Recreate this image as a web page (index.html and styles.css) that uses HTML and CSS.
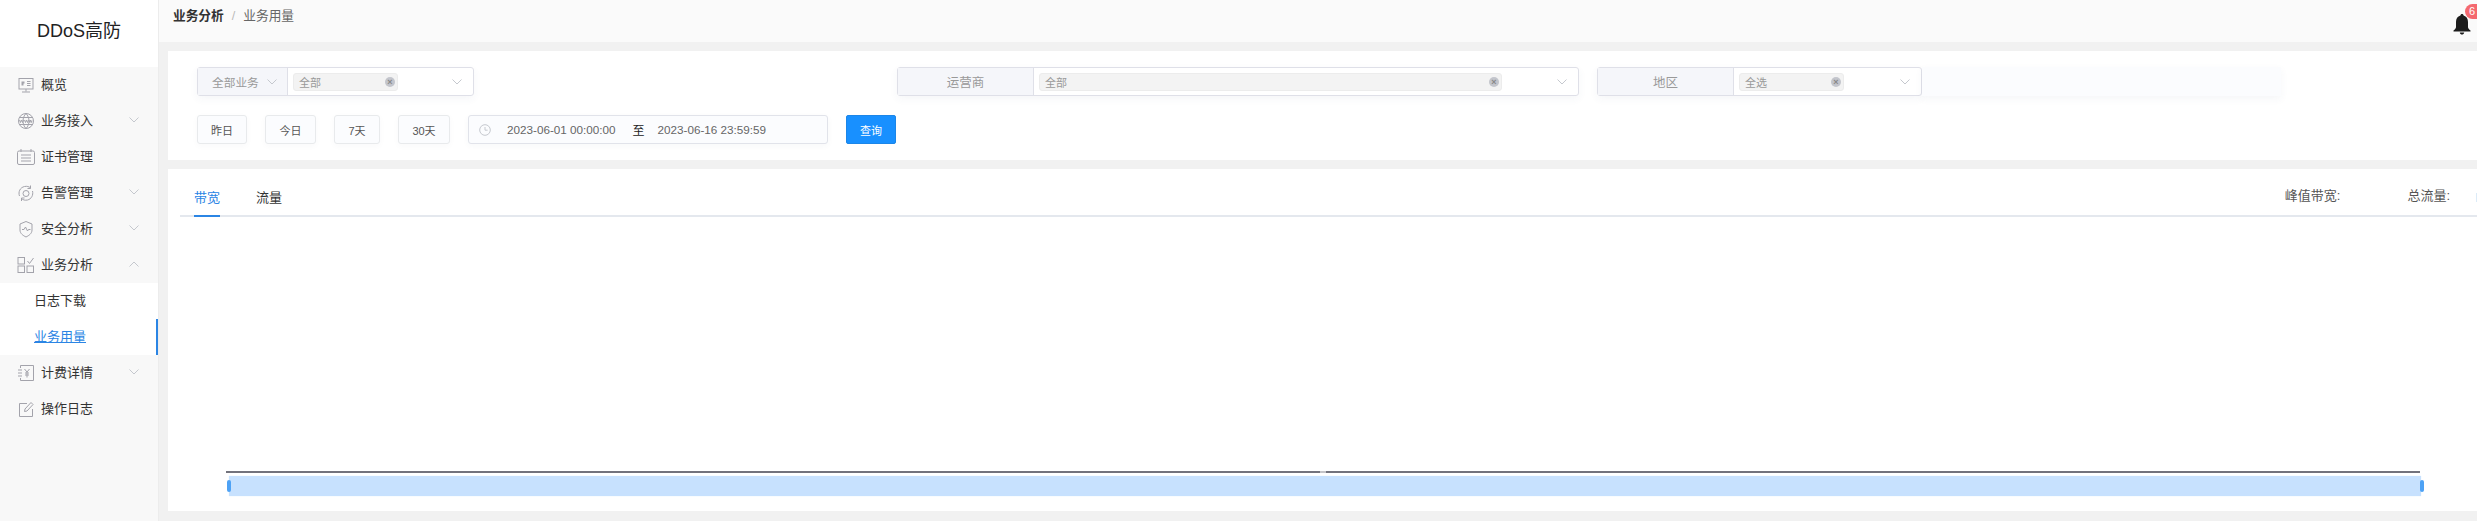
FILE: index.html
```html
<!DOCTYPE html>
<html lang="zh-CN">
<head>
<meta charset="utf-8">
<title>DDoS高防</title>
<link rel="stylesheet" href="styles.css">
</head>
<body>
<div class="app">
  <aside class="sidebar">
    <div class="logo">DDoS高防</div>
    <nav class="menu">
      <div class="item"><svg class="ico" viewBox="0 0 18 18"><rect x="2" y="2.5" width="14" height="10.5"/><path d="M9 13v2.5M5 16h8M10 5.5h3.5M10 7.5h3.5M10 9.5h3.5"/><path class="solid" d="M4.5 5.5h3v2h-1v2h-2z"/></svg><span>概览</span></div>
      <div class="item"><svg class="ico" viewBox="0 0 18 18"><circle cx="9" cy="9" r="7.5"/><path d="M2.5 5.5h13M2.5 12.5h13M9 1.5c-4 4-4 11 0 15M9 1.5c4 4 4 11 0 15M2.5 8l1 2.5 1-2.5 1 2.5 1-2.5M7.500 8l1 2.500 1-2.500 1 2.500 1-2.500M12 8l.8 2.500.8-2.500.8 2.500.6-2"/></svg><span>业务接入</span><svg class="chev" viewBox="0 0 10 6"><path d="M.5.5 5 5 9.500.5"/></svg></div>
      <div class="item"><svg class="ico" viewBox="0 0 18 18"><rect x="0.500" y="3" width="17" height="13.500" rx="1.500"/><path d="M4 1v3M14 1v3M4 7h10M4 10h10M4 13h10"/></svg><span>证书管理</span></div>
      <div class="item"><svg class="ico" viewBox="0 0 18 18"><circle cx="9" cy="9.500" r="3"/><path d="M2.500 12c-1.500-4 .5-8.500 5-9.500 2.500-.5 4.500 0 6 1.500M13.500 1.500V4.500H10.500M15.500 7c1 4-1 8-5 9-2.500.5-4.500 0-6-1.500M4.500 17v-3h3"/></svg><span>告警管理</span><svg class="chev" viewBox="0 0 10 6"><path d="M.5.5 5 5 9.500.5"/></svg></div>
      <div class="item"><svg class="ico" viewBox="0 0 18 18"><path d="M9 1.500 15 4v6c0 3.500-3 5.500-6 7-3-1.500-6-3.500-6-7V4z"/><path d="M5 9.500h2l1.500-2.500 2 4 1-1.500h2"/></svg><span>安全分析</span><svg class="chev" viewBox="0 0 10 6"><path d="M.5.500 5 5 9.500.500"/></svg></div>
      <div class="item"><svg class="ico" viewBox="0 0 18 18"><rect x="1" y="1.500" width="6.500" height="6.500"/><rect x="1" y="10" width="6.500" height="6.500"/><rect x="10" y="10" width="6.500" height="6.500"/><path d="M10.500 5l2 2.500 4-5.500"/></svg><span>业务分析</span><svg class="chev" viewBox="0 0 10 6"><path d="M.5 5.500 5 1l4.500 4.500"/></svg></div>
      <div class="sub">日志下载</div>
      <div class="sub active"><u>业务用量</u></div>
      <div class="item"><svg class="ico" viewBox="0 0 18 18"><path d="M3.500 4V1.500h13v15h-13V14"/><path d="M1 6h4M1 9h4M1 12h4M7.500 5 10 8l2.500-3M10 8v5.500M8 9h4M8 11h4"/></svg><span>计费详情</span><svg class="chev" viewBox="0 0 10 6"><path d="M.5.500 5 5 9.500.500"/></svg></div>
      <div class="item"><svg class="ico" viewBox="0 0 18 18"><path d="M15.500 9v7.500h-13V3.500H10"/><path d="M7.500 11.500l.5-2.500L14 2.500l2 2-6 6.500z"/></svg><span>操作日志</span></div>
    </nav>
  </aside>
  <main class="main">
    <header class="topbar">
      <div class="crumb"><b>业务分析</b><i>/</i><span>业务用量</span></div>
      <div class="bell">
        <svg viewBox="0 0 18 22" class="bell-ico"><path d="M9 1c1 0 1.500.6 1.600 1.500C13.500 3.300 15 5.800 15 9v5c0 1.300 1 2.500 2.500 3.500v1H.5v-1C2 16.500 3 15.300 3 14V9c0-3.200 1.500-5.700 4.400-6.500C7.500 1.600 8 1 9 1zM6.800 19.500h4.400C11 21 10 21.500 9 21.500S7 21 6.800 19.500z"/></svg>
        <span class="badge">6</span>
      </div>
    </header>
    <section class="panel filters">
      <div class="row">
        <div class="group g1">
          <div class="lab lab-sel">全部业务<svg class="chev" viewBox="0 0 10 6"><path d="M.5.500 5 5 9.500.500"/></svg></div>
          <div class="sel"><span class="tag">全部<em class="x"></em></span><svg class="chev" viewBox="0 0 10 6"><path d="M.5.500 5 5 9.500.500"/></svg></div>
        </div>
        <div class="group g2">
          <div class="lab">运营商</div>
          <div class="sel"><span class="tag wide">全部<em class="x"></em></span><svg class="chev" viewBox="0 0 10 6"><path d="M.5.500 5 5 9.500.500"/></svg></div>
        </div>
        <div class="group g3">
          <div class="lab">地区</div>
          <div class="sel"><span class="tag">全选<em class="x"></em></span><svg class="chev" viewBox="0 0 10 6"><path d="M.5.500 5 5 9.500.500"/></svg></div>
        </div>
        <div class="tail"></div>
      </div>
      <div class="row row2">
        <button class="btn b1">昨日</button>
        <button class="btn b2">今日</button>
        <button class="btn b3">7天</button>
        <button class="btn b4">30天</button>
        <div class="date">
          <svg class="clock" viewBox="0 0 12 12"><circle cx="6" cy="6" r="5.300"/><path d="M6 3v3.200h2.600"/></svg>
          <span>2023-06-01 00:00:00</span><b>至</b><span>2023-06-16 23:59:59</span>
        </div>
        <button class="query">查询</button>
      </div>
    </section>
    <section class="panel chart">
      <div class="tabs">
        <div class="tab on">带宽</div>
        <div class="tab">流量</div>
        <div class="stats">
          <span>峰值带宽:</span>
          <span class="s2">总流量:</span>
          <span class="val"></span>
        </div>
      </div>
      <div class="zoom">
        <div class="axis"><span class="nick"></span></div>
        <div class="band"><span class="h hl"></span><span class="h hr"></span></div>
      </div>
    </section>
  </main>
</div>
</body>
</html>
```
FILE: styles.css
```css
* { box-sizing: border-box; }
html, body { margin: 0; height: 100%; overflow: hidden; }
body { font-family: "Liberation Sans", "Noto Sans CJK SC", sans-serif; background: #f1f1f1; color: #333; }
.app { display: flex; width: 2477px; height: 521px; overflow: hidden; }

.sidebar { width: 159px; flex: none; background: #f8f8f8; border-right: 1px solid #ececec; }
.logo { height: 67px; background: #fff; font-size: 18px; line-height: 62px; text-align: center; color: #222; }
.item { display: flex; align-items: center; height: 36px; padding-left: 17px; font-size: 13px; color: #333; position: relative; }
.ico { width: 18px; height: 18px; margin-right: 6px; flex: none; fill: none; stroke: #a3a3ab; stroke-width: 1; }
.ico .solid { fill: #a3a3ab; stroke: none; }
.item span { line-height: 36px; }
.chev { width: 10px; height: 6px; fill: none; stroke: #c5c8ce; stroke-width: 1; flex: none; }
.item .chev { margin-left: auto; margin-right: 19px; margin-top: -3px; }
.sub { height: 36px; line-height: 36px; padding-left: 34px; font-size: 13px; background: #fff; color: #333; }
.sub.active { color: #2b85e4; border-right: 2px solid #2b85e4; }

.main { flex: 1; min-width: 0; display: flex; flex-direction: column; }
.topbar { height: 42px; flex: none; background: #fafafa; display: flex; justify-content: space-between; padding-left: 14px; }
.crumb { font-size: 12.7px; line-height: 32px; color: #666; display: flex; }
.crumb b { color: #333; font-weight: 700; }
.crumb i { font-style: normal; color: #bbb; margin: 0 8px; }
.bell { width: 24px; position: relative; }
.bell-ico { position: absolute; left: 0; top: 13px; width: 18px; height: 22px; fill: #1c1c1c; }
.badge { position: absolute; left: 12px; top: 4px; width: 24px; height: 15px; border-radius: 8px; background: #f4696f; color: #fff; font-size: 11px; line-height: 15px; padding-left: 4px; }

.panel { background: #fff; margin-left: 9px; margin-top: 9px; }
.filters { height: 109px; padding: 16px 0 0 29px; flex: none; }
.row { display: flex; height: 29px; }
.row2 { margin-top: 19px; }

.group { display: flex; height: 29px; border: 1px solid #dfe0e8; border-radius: 3px; box-shadow: 0 3px 8px rgba(60, 70, 110, .05); flex: none; }
.g1 { width: 277px; }
.g2 { width: 682px; margin-left: 423px; }
.g3 { width: 325px; margin-left: 18px; }
.lab { width: 136px; flex: none; background: #f5f6fa; border-right: 1px solid #dfe0e8; display: flex; align-items: center; justify-content: center; color: #999; font-size: 12.500px; }
.g1 .lab { width: 90px; font-size: 11.700px; justify-content: flex-start; padding-left: 14px; }
.lab .chev { margin-left: 8px; }
.sel { flex: 1; display: flex; align-items: center; padding: 0 11px 0 5px; justify-content: space-between; }
.tag { width: 105px; height: 18px; background: #f3f3f3; border: 1px solid #ececec; border-radius: 3px; display: flex; align-items: center; justify-content: space-between; padding: 0 2px 0 5px; color: #999; font-size: 11px; }
.tag.wide { width: 463px; }
.x { width: 10px; height: 10px; border-radius: 50%; background: #c3c5cc; position: relative; display: block; }
.x::after { content: "×"; position: absolute; inset: 0; font: 700 9px/10px "Liberation Sans", sans-serif; text-align: center; color: #888; }
.tail { width: 359px; height: 29px; background: #fbfcfe; box-shadow: 0 3px 8px rgba(60, 70, 110, .05); flex: none; }

.btn { height: 29px; background: #fbfcfe; border: 1px solid #e8eaec; border-radius: 3px; font: 11px "Liberation Sans", "Noto Sans CJK SC", sans-serif; color: #555; padding: 0; flex: none; box-shadow: 0 2px 6px rgba(60, 70, 110, .03); }
.b1 { width: 50px; }
.b2 { width: 51px; margin-left: 18px; }
.b3 { width: 46px; margin-left: 18px; }
.b4 { width: 52px; margin-left: 18px; }
.date { width: 360px; height: 29px; margin-left: 18px; background: #fbfcfe; border: 1px solid #e1e3ea; border-radius: 3px; display: flex; align-items: center; padding-left: 10px; font-size: 11.700px; color: #666; box-shadow: 0 2px 6px rgba(60, 70, 110, .04); flex: none; }
.clock { width: 12px; height: 12px; fill: none; stroke: #c5c8ce; stroke-width: 1; margin-right: 16px; flex: none; }
.date b { font-weight: 400; color: #222; font-size: 12px; margin: 0 13px 0 17px; }
.query { width: 50px; height: 29px; margin-left: 18px; background: #1890ff; border: 1px solid #1c86e8; border-radius: 2px; color: #fff; font: 11px "Liberation Sans", "Noto Sans CJK SC", sans-serif; padding: 0; flex: none; }

.chart { height: 342px; flex: none; display: flex; flex-direction: column; padding-bottom: 15px; }
.tabs { margin-left: 12px; height: 48px; flex: none; border-bottom: 2px solid #e4e8ee; display: flex; padding-left: 14px; font-size: 13px; }
.tab { width: 26px; height: 48px; line-height: 58px; color: #333; margin-right: 36px; white-space: nowrap; }
.tab.on { color: #2b85e4; border-bottom: 2px solid #2b85e4; }
.stats { margin-left: auto; display: flex; align-items: flex-start; line-height: 54px; color: #555; }
.s2 { margin-left: 67px; }
.val { width: 1px; height: 9px; margin: 24px 0 0 26px; background: #dcebf8; }

.zoom { margin-top: auto; }
.axis { height: 2px; margin: 0 57px 0 58px; background: #72727c; display: flex; justify-content: center; }
.nick { width: 6px; height: 2px; background: #c4c4c8; }
.band { height: 20px; margin: 3px 56px 0 61px; background: #c7e1fe; box-shadow: 0 0 1px #d5e9ff; position: relative; }
.h { position: absolute; top: 4px; width: 4px; height: 12px; border-radius: 2px; background: #4ea2f5; }
.hl { left: -2px; }
.hr { right: -3px; }
```
